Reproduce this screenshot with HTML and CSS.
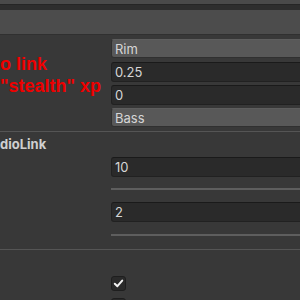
FILE: index.html
```html
<!DOCTYPE html>
<html>
<head>
<meta charset="utf-8">
<link rel="stylesheet" href="styles.css">
</head>
<body>
<div class="page">
  <div class="topstrip"></div>
  <div class="band"></div>
  <div class="header"></div>
  <div class="panel">
    <div class="row m4"><div class="dropdown h19">Rim</div></div>
    <div class="row m4"><div class="field">0.25</div></div>
    <div class="row m3"><div class="field">0</div></div>
    <div class="row m3"><div class="dropdown h19">Bass</div></div>
    <div class="sep m4"></div>
    <div class="section">dioLink</div>
    <div class="row m5"><div class="field">10</div></div>
    <div class="row m11"><div class="slider"></div></div>
    <div class="row m12"><div class="field">2</div></div>
    <div class="row m12"><div class="slider"></div></div>
    <div class="sep m13"></div>
    <div class="row m26">
      <div class="check">
        <svg width="11" height="11" viewBox="0 0 11 11"><path d="M1.8 5.8 L4.4 8.2 L9.2 2.6" fill="none" stroke="#f2f2f2" stroke-width="2" stroke-linecap="round" stroke-linejoin="round"/></svg>
      </div>
    </div>
    <div class="row m7"><div class="check"></div></div>
  </div>
  <div class="note">
    <div class="l1">o link</div>
    <div class="l2">"stealth" xp</div>
  </div>
</div>
</body>
</html>
```
FILE: styles.css
```css
html, body {
  margin: 0;
  padding: 0;
  background: #383838;
  overflow: hidden;
}
.page {
  position: relative;
  width: 300px;
  height: 300px;
  overflow: hidden;
  font-family: Inter, "Liberation Sans", sans-serif;
  font-size: 13px;
  color: #d6d6d6;
}
.topstrip { height: 4px; background: #4a4a4a; }
.band { height: 6px; background: #2e2e2e; border-top: 1px solid #262626; box-sizing: border-box; }
.header { height: 25px; background: #4c4c4c; border-bottom: 1px solid #303030; box-sizing: border-box; }
.panel { display: flex; flex-direction: column; }
.row {
  display: flex;
  padding-left: 111px;
  margin-right: -20px;
}
.m3 { margin-top: 3px; }
.m4 { margin-top: 4px; }
.m5 { margin-top: 5px; }
.m7 { margin-top: 7px; }
.m11 { margin-top: 11px; }
.m12 { margin-top: 12px; }
.m13 { margin-top: 13px; }
.m26 { margin-top: 26px; }
.dropdown, .field {
  flex: 1;
  box-sizing: border-box;
  height: 20px;
  border-radius: 3px;
  padding-left: 3px;
  display: flex;
  align-items: center;
  line-height: 16px;
}
.h19 { height: 19px; }
.dropdown {
  background: #585858;
  border: 1px solid #303030;
  border-top-color: #5e5e5e;
}
.field {
  background: #2a2a2a;
  border: 1px solid #212121;
  border-top-color: #1a1a1a;
}
.sep { height: 1px; background: #555555; }
.section {
  margin-top: 4px;
  height: 16px;
  line-height: 16px;
  font-weight: bold;
  color: #d0d0d0;
}
.slider { flex: 1; height: 2px; background: #5e5e5e; }
.check {
  width: 15px;
  height: 15px;
  box-sizing: border-box;
  background: #2a2a2a;
  border: 1px solid #1e1e1e;
  border-radius: 3px;
  display: flex;
  align-items: center;
  justify-content: center;
}
.note {
  position: absolute;
  left: 0;
  top: 53px;
  font-family: "Liberation Sans", Arial, sans-serif;
  font-weight: bold;
  font-size: 18px;
  line-height: 22px;
  color: #ee0000;
  white-space: nowrap;
}
```
